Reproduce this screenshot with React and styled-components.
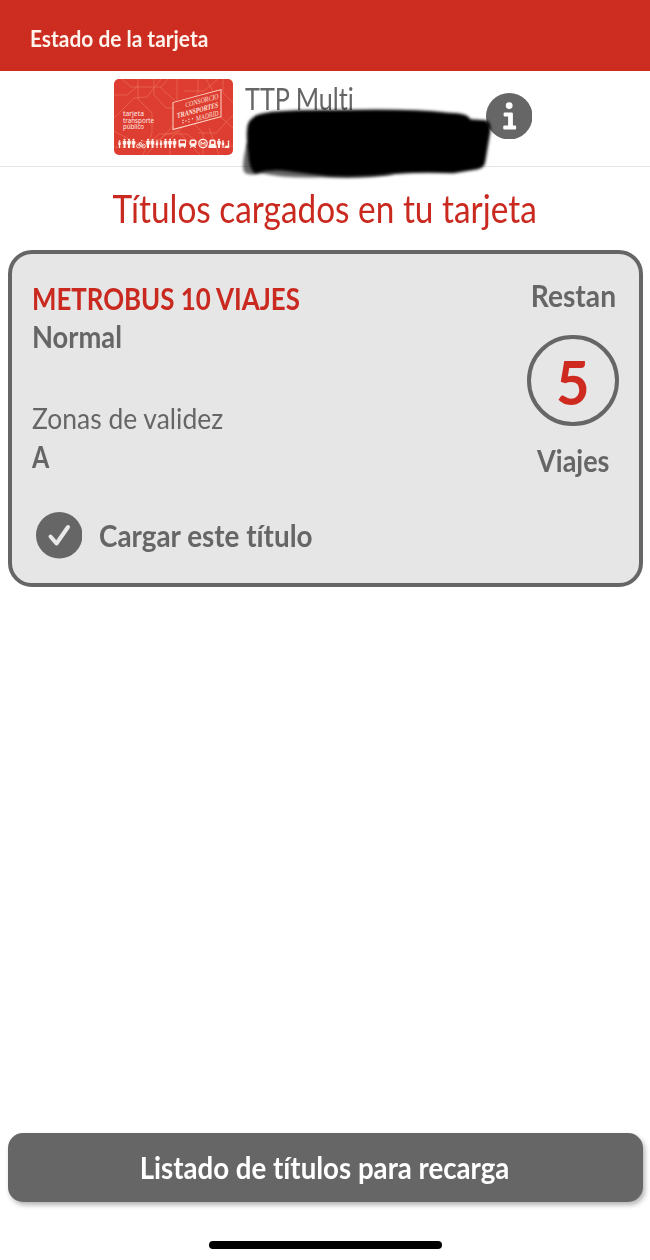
import React from 'react';
import styled, { createGlobalStyle } from 'styled-components';

const GlobalStyle = createGlobalStyle`
  * {
    box-sizing: border-box;
  }

  body {
    margin: 0;
    background: #fff;
    color: #666;
    font-family: Lato, 'Open Sans', sans-serif;
  }
`;

const Screen = styled.main`
  display: flex;
  flex-direction: column;
  height: 1260px;
  padding-bottom: 11.5px;
  overflow: hidden;
`;

const Label = styled.div`
  height: ${({ $line }) => $line || 38.5}px;
  line-height: ${({ $line }) => $line || 38.5}px;
  font-size: ${({ $size }) => $size || 30}px;
  font-weight: ${({ $light }) => ($light ? 400 : 700)};
  font-variant-ligatures: none;
  color: ${({ $color }) => $color || 'inherit'};
  white-space: nowrap;
  transform: scaleX(${({ $squeeze }) => $squeeze || 1});
  transform-origin: ${({ $center }) => ($center ? 'center' : 'left')};
`;

const Header = styled.header`
  height: 70.5px;
  padding: 20px 0 0 30px;
  background: #cc2d20;
`;

const CardBar = styled.section`
  position: relative;
  display: flex;
  align-items: flex-start;
  height: 96.5px;
  padding: 8px 0 0 113.5px;
  border-bottom: 1px solid #e4e4e4;
`;

const CardArt = styled.svg`
  width: 119px;
  height: 76px;
  flex: none;
`;

const CardName = styled.div`
  width: 241px;
  margin-left: 12px;
`;

const InfoIcon = styled.svg`
  width: 46.5px;
  height: 46.5px;
  margin-top: 14px;
  flex: none;
`;

const Redaction = styled.svg`
  position: absolute;
  left: 235px;
  top: -0.5px;
  width: 305px;
  height: 120px;
`;

const Title = styled.h1`
  display: flex;
  justify-content: center;
  height: 83px;
  margin: 0;
  padding-top: 15.5px;
`;

const TicketCard = styled.section`
  display: flex;
  justify-content: space-between;
  height: 337px;
  margin: 0 7.5px;
  padding: 24.5px 19.5px 0 20px;
  border: 4.5px solid #666;
  border-radius: 24px;
  background: #e6e6e6;
`;

const Validity = styled.div`
  margin-top: 43px;
`;

const LoadRow = styled.div`
  display: flex;
  align-items: center;
  gap: 17px;
  margin: 36.5px 0 0 4px;
`;

const CheckIcon = styled.svg`
  width: 46.5px;
  height: 46.5px;
`;

const Remaining = styled.div`
  display: flex;
  flex-direction: column;
  align-items: center;
  width: 92px;
  margin-top: -3px;
`;

const Counter = styled.div`
  display: flex;
  justify-content: center;
  width: 91.5px;
  height: 91.5px;
  margin: 20.5px 0 14.5px;
  border: 4.5px solid #666;
  border-radius: 50%;
`;

const ReloadButton = styled.button`
  display: flex;
  justify-content: center;
  align-items: center;
  height: 69px;
  margin: auto 7.5px 0;
  padding: 1px 0 0;
  border: 0;
  border-radius: 15px;
  background: #666;
  box-shadow: 2px 3px 5px rgba(0, 0, 0, 0.3);
  color: #fff;
  font-family: inherit;
`;

const HomeIndicator = styled.div`
  width: 233px;
  height: 7.5px;
  margin: 39.5px auto 0;
  border-radius: 4px;
  background: #000;
`;

const adults = [10.5, 15, 19.5, 34, 38.5, 51.5, 56, 60.5, 105];
const children = [5.5, 43, 47, 109];

const TransportCard = () => (
  <CardArt viewBox="0 0 119 76">
    <defs>
      <clipPath id="cardShape">
        <rect width="119" height="76" rx="5" />
      </clipPath>
    </defs>
    <g clipPath="url(#cardShape)">
      <rect width="119" height="76" fill="#de3d32" />
      <g fill="none" stroke="#ee7c5c" strokeWidth="0.7" opacity="0.8">
        <path d="M8 0l9 8h30l7-8M0 16h13l12-10M24 0v20l14 14v20l-9 22M0 39l20-20 13-1 14-18" />
        <path d="M40 0v16l12 13h18l14-15V0M46 8l24 22v17l-14 13v16M63 0v28l26 26v22" />
        <path d="M0 52l22 12 25-4 16-18 21-8M70 12h20l14-12M92 0l8 14v18l19 17M84 54h18l17-18" />
        <path d="M109 0v14l10 10M0 68h31l14-13h28l16 12h30M32 76l18-20 14-4 22 24M95 49l10 27" />
      </g>
      <g fill="#ffece5" fontFamily="'Noto Sans', sans-serif" fontSize="6.3">
        <text x="9" y="37.2" textLength="21" lengthAdjust="spacingAndGlyphs">tarjeta</text>
        <text x="9" y="43.6" textLength="31" lengthAdjust="spacingAndGlyphs">transporte</text>
        <text x="9" y="50" textLength="21" lengthAdjust="spacingAndGlyphs">público</text>
      </g>
      <g transform="translate(59 23.500) skewY(-15)">
        <rect width="48" height="27" fill="#de3d32" stroke="#fbd5c7" strokeWidth="1" />
        <g fill="#fbe3d9" fontFamily="'Liberation Serif', serif" fontSize="7.6">
          <text x="12.5" y="8.3" textLength="33" lengthAdjust="spacingAndGlyphs">CONSORCIO</text>
          <text x="4" y="16.8" textLength="41" lengthAdjust="spacingAndGlyphs" fontWeight="700">TRANSPORTES</text>
          <text x="23" y="25" textLength="22.5" lengthAdjust="spacingAndGlyphs">MADRID</text>
          <circle cx="10" cy="20.500" r="0.700" />
          <circle cx="10" cy="23" r="0.700" />
          <circle cx="13" cy="22" r="0.700" />
          <circle cx="16" cy="21" r="0.700" />
          <circle cx="16" cy="23.500" r="0.700" />
          <circle cx="19.500" cy="21.500" r="0.700" />
        </g>
      </g>
      <g fill="#fff1eb">
        {adults.map(x => (
          <g key={x}>
            <circle cx={x} cy="60.8" r="1.1" />
            <path d={`M${x - 1.8} 62h3.6v3.4h-0.8v3.6h-2v-3.6h-0.8z`} />
          </g>
        ))}
        {children.map(x => (
          <g key={x}>
            <circle cx={x} cy="62.2" r="0.9" />
            <path d={`M${x - 1.2} 63.3h2.4v2.7h-0.6v3h-1.2v-3h-0.6z`} />
          </g>
        ))}
        <path d="M65 60.500h6.500l.500 1v6h-.800V69h-1.300v-1.500h-3.300V69h-1.300v-1.500h-.800v-6z" />
        <path d="M77 60.500h4l1.500 1.500v3.500l-1.300 1.500 1 2H81l-.700-1.200h-2.600L77 69h-1.200l1-2-1.300-1.500V62z" />
        <path d="M96.500 60.500h4l1.200 1.500v4.500h.800V69h-8v-2.500h.800V62z" />
        <circle cx="114.500" cy="62.500" r="0.900" />
        <path d="M113.800 63.500h1.400V69h-5l1.500-2.200h2.100z" />
      </g>
      <g fill="none" stroke="#fff1eb" strokeWidth="0.800">
        <circle cx="24.500" cy="67" r="1.900" />
        <circle cx="29.500" cy="67" r="1.900" />
        <path d="M24.500 67l1.800-4 3.200 4h-3l-1-3M27 61.500h1.500" />
        <circle cx="89" cy="64.500" r="4.200" strokeWidth="1.200" />
        <path d="M87 66.700v-4l2 2.500 2-2.500v4" strokeWidth="1" />
      </g>
      <path
        fill="#de3d32"
        d="M66 61.800h5v2.500h-5zM77.200 62h3.600v2.200h-3.600zM97 62.200h3v2.500h-3z"
      />
    </g>
  </CardArt>
);

const App = () => (
  <>
    <GlobalStyle />
    <Screen>
      <Header>
        <Label $size={22} $color="#fff3ee" $squeeze={0.95}>Estado de la tarjeta</Label>
      </Header>
      <CardBar>
        <TransportCard />
        <CardName>
          <Label $light $squeeze={0.84}>TTP Multi</Label>
        </CardName>
        <InfoIcon viewBox="0 0 46.5 46.5">
          <circle cx="23.25" cy="23.25" r="23.25" fill="#666" />
          <g fill="#fff">
            <circle cx="23.2" cy="12.6" r="3.4" />
            <path d="M18.800 19.500h6.900a1.200 1.200 0 0 1 1.200 1.200v11.800h2.100a1.200 1.200 0 0 1 1.200 1.200v1.600a1.200 1.200 0 0 1-1.200 1.200H18.400a1.200 1.200 0 0 1-1.200-1.200v-1.600a1.200 1.200 0 0 1 1.200-1.200h3.700v-9h-3.300a1.200 1.200 0 0 1-1.200-1.200v-1.600a1.200 1.200 0 0 1 1.200-1.200z" />
          </g>
        </InfoIcon>
        <Redaction viewBox="0 0 915 360">
          <defs>
            <filter id="soft" x="-10%" y="-10%" width="120%" height="120%">
              <feGaussianBlur stdDeviation="4.5" />
            </filter>
          </defs>
          <path
            d="M36 220 Q20 280 26 302 Q34 320 80 310 Q150 326 260 322 Q400 328 480 312 L300 270z"
            fill="#000"
            opacity="0.6"
            filter="url(#soft)"
          />
          <path
            d="M68 134 Q110 118 300 120 Q520 114 640 128 Q698 128 706 148 L752 151 Q770 155 766 185 L750 280 Q745 300 700 302 L655 310 Q560 306 480 312 Q380 322 280 318 Q220 312 160 304 Q110 296 60 310 Q42 300 40 250 Q34 220 36 180 Q36 147 68 134z"
            filter="url(#soft)"
          />
        </Redaction>
      </CardBar>
      <Title>
        <Label $size={38} $line={50} $light $center $color="#c9291f" $squeeze={0.878}>
          Títulos cargados en tu tarjeta
        </Label>
      </Title>
      <TicketCard>
        <div>
          <Label $color="#c9291f" $squeeze={0.862}>METROBUS 10 VIAJES</Label>
          <Label $squeeze={0.91}>Normal</Label>
          <Validity>
            <Label $size={29} $light $squeeze={0.912}>Zonas de validez</Label>
            <Label $squeeze={0.83}>A</Label>
          </Validity>
          <LoadRow>
            <CheckIcon viewBox="0 0 46.5 46.5">
              <circle cx="23.25" cy="23.25" r="23.25" fill="#666" />
              <path
                d="M14.500 24.500l6 7L32 15"
                fill="none"
                stroke="#e9e9e9"
                strokeWidth="4"
                strokeLinecap="round"
                strokeLinejoin="round"
              />
            </CheckIcon>
            <Label $squeeze={0.928}>Cargar este título</Label>
          </LoadRow>
        </div>
        <Remaining>
          <Label $center $squeeze={0.94}>Restan</Label>
          <Counter>
            <Label $size={61} $line={85} $center $color="#cf2a20" $squeeze={0.95}>5</Label>
          </Counter>
          <Label $center $squeeze={0.9}>Viajes</Label>
        </Remaining>
      </TicketCard>
      <ReloadButton>
        <Label $center $squeeze={0.922}>Listado de títulos para recarga</Label>
      </ReloadButton>
      <HomeIndicator />
    </Screen>
  </>
);

export default App;
